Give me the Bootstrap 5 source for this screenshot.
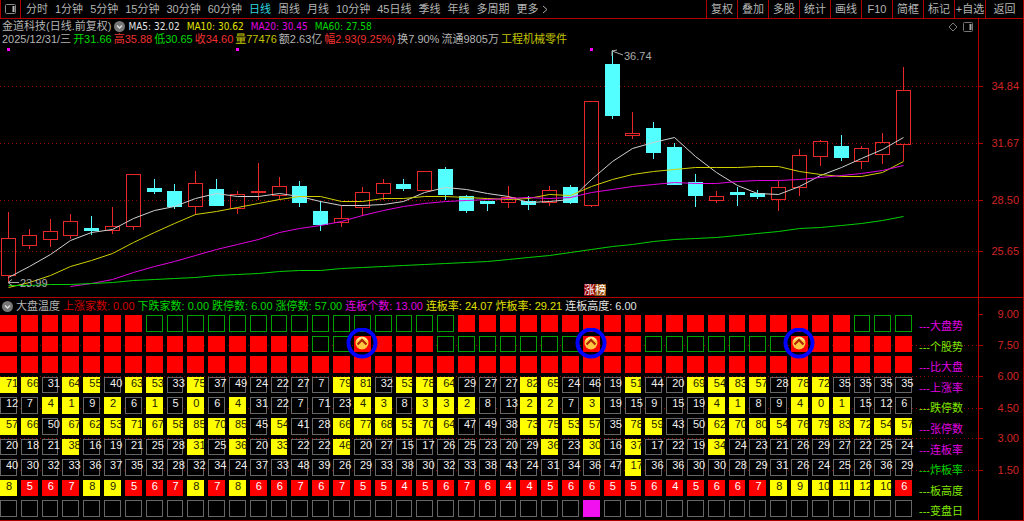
<!DOCTYPE html>
<html lang="zh-CN">
<head>
<meta charset="utf-8">
<meta name="viewport" content="width=device-width, initial-scale=1">
<title>金道科技 日线</title>
<link href="https://cdn.jsdelivr.net/npm/bootstrap@5.3.0/dist/css/bootstrap.min.css" rel="stylesheet">
<style>
:root { --line: #b00000; --dim: #b4b4b4; }
body { background: #000; color: var(--dim); font: 11px/13px "Liberation Sans", "Noto Sans CJK SC", sans-serif; }
button { background: none; border: 0; color: inherit; padding: 0; white-space: nowrap; }
.toolbar { height: 19px; border-bottom: 1px solid var(--line); }
.tool-icon { width: 21px; border-left: 1px solid var(--line); border-right: 1px solid var(--line); }
.periods { gap: 7px; padding-left: 5px; }
.periods .current { color: #2fd6e0; }
.actions { border-right: 1px solid var(--line); }
.actions button { width: 31px; border-left: 1px solid var(--line); }
.actions button:last-child { width: 38px; }
.axis { width: 46px; flex: none; border-left: 1px solid var(--line); border-right: 1px solid var(--line); }
.panel-chart { flex: 279 1 0; min-height: 0; }
.panel-heat { flex: 223 1 0; min-height: 0; border-top: 1px solid var(--line); border-bottom: 1px solid var(--line); }
.plot { min-width: 0; }
.info { top: 1px; left: 2px; right: 4px; }
.ma-row { font-family: "DejaVu Sans Condensed", "Noto Sans CJK SC", sans-serif; font-size: 10px; gap: 3px; }
.ma-row h1 { font: 11px/13px "Liberation Sans", "Noto Sans CJK SC", sans-serif; margin: 0; }
.ma-list { gap: 7px; }
.quote-row { gap: 2px; }
.heat-head { gap: 3px; height: 15px; padding: 2px 0 0 2px; }
.c-white { color: #e4e4e4; } .c-yellow { color: #e0e000; } .c-mag { color: #e000e0; } .c-green { color: #00d800; }
.c-red { color: #f03030; } .c-dred { color: #d00000; } .c-olive { color: #c4c400; } .c-lime { color: #80e800; }
.heat { flex: 1 1 0; min-height: 0; padding-bottom: 1px; }
.heat table, .heat tbody { display: flex; flex-direction: column; flex: 1; min-width: 0; margin: 0; }
.heat tr { display: grid; grid-template-columns: repeat(44, minmax(0, 1fr)) 64px; flex: 1 1 0; margin-left: -2px; }
.heat td { padding: 2px; display: flex; position: relative; }
.heat th { font-weight: 400; padding: 7px 0 0 5px; line-height: 13px; white-space: nowrap; }
.cell { flex: 1; min-width: 0; border: 1px solid #666; padding-left: 5px; line-height: 11px; color: #eee; white-space: nowrap; background: #000; }
.cell.is-red { background: #f00; border-color: #f00; color: #fff; }
.cell.is-hot { background: #ff0; border-color: #ff0; color: #222200; }
.cell.is-green { border-color: #00a000; }
.cell.is-turn { background: #f010f0; border-color: #f010f0; }
.signal { top: 50%; left: 50%; transform: translate(-50%, -50%); z-index: 2; }
svg text { font-family: "Liberation Sans", "Noto Sans CJK SC", sans-serif; font-size: 11px; }
</style>
</head>
<body>
<div class="vh-100 d-flex flex-column overflow-hidden">
  <header class="toolbar d-flex justify-content-between flex-shrink-0">
    <nav class="d-flex" aria-label="周期">
      <button class="tool-icon d-flex align-items-center justify-content-center" aria-label="侧栏">
        <svg width="12" height="11" fill="none" stroke="#888"><rect x=".5" y=".5" width="10" height="9" rx="1"/><path d="M8.500 2v6" stroke="#bbb" stroke-width="2"/></svg>
      </button>
      <div class="periods d-flex align-items-center" id="periods"></div>
    </nav>
    <div class="actions d-flex" id="actions"></div>
  </header>

  <section class="panel-chart d-flex">
    <div class="plot flex-fill position-relative">
      <svg id="kline" class="position-absolute w-100 h-100"></svg>
      <div class="info position-absolute d-flex justify-content-between">
        <div>
          <div class="ma-row d-flex align-items-center">
            <h1>金道科技(日线.前复权)</h1>
            <svg width="11" height="11"><circle cx="5.500" cy="5.500" r="5.500" fill="#777"/><path d="M3 4.500l2.500 2.500L8 4.500" fill="none" stroke="#ddd" stroke-width="1.500"/></svg>
            <div class="ma-list d-flex"><span class="c-white">MA5: 32.02</span><span class="c-yellow">MA10: 30.62</span><span class="c-mag">MA20: 30.45</span><span class="c-green">MA60: 27.58</span></div>
          </div>
          <div class="quote-row d-flex">
            <span>2025/12/31/三</span><span class="c-green">开31.66</span><span class="c-red">高35.88</span><span class="c-green">低30.65</span><span class="c-red">收34.60</span><span class="c-olive">量77476</span><span>额2.63亿</span><span class="c-red">幅2.93(9.25%)</span><span>换7.90%</span><span>流通9805万</span><span class="c-olive">工程机械零件</span>
          </div>
        </div>
        <svg width="28" height="14" fill="none" stroke="#777"><path d="M7 3l4 4-4 4-4-4z"/><rect x="17.500" y="2.500" width="9" height="9" rx="1"/><path d="M24.500 4v6" stroke="#aaa" stroke-width="2"/></svg>
      </div>
    </div>
    <div class="axis"><svg id="priceAxis" class="w-100 h-100 d-block"></svg></div>
  </section>

  <section class="panel-heat d-flex">
    <div class="plot flex-fill d-flex flex-column position-relative">
      <svg id="heatGrid" class="position-absolute w-100 h-100"></svg>
      <div class="heat-head d-flex align-items-center position-relative">
        <svg width="11" height="11"><circle cx="5.500" cy="5.500" r="5.500" fill="#777"/><path d="M3 4.500l2.500 2.500L8 4.500" fill="none" stroke="#ddd" stroke-width="1.500"/></svg>
        <span>大盘温度</span><span class="c-dred">上涨家数: 0.00</span><span class="c-green">下跌家数: 0.00</span><span class="c-green">跌停数: 6.00</span><span class="c-green">涨停数: 57.00</span><span class="c-mag">连板个数: 13.00</span><span class="c-yellow">连板率: 24.07</span><span class="c-yellow">炸板率: 29.21</span><span class="c-white">连板高度: 6.00</span>
      </div>
      <div class="heat d-flex position-relative"><table><tbody id="heat"></tbody></table></div>
    </div>
    <div class="axis"><svg id="heatAxis" class="w-100 h-100 d-block"></svg></div>
  </section>
</div>

<script src="https://cdn.jsdelivr.net/npm/bootstrap@5.3.0/dist/js/bootstrap.bundle.min.js"></script>
<script>
const $ = id => document.getElementById(id);

$('periods').innerHTML = '分时 1分钟 5分钟 15分钟 30分钟 60分钟 日线 周线 月线 10分钟 45日线 季线 年线 多周期'.split(' ')
  .map(t => `<button class="${t === '日线' ? 'current' : ''}">${t}</button>`).join('') +
  '<button>更多 <svg width="6" height="9" fill="none" stroke="#aaa"><path d="M1 1l4 3.500L1 8"/></svg></button>';
$('actions').innerHTML = '复权 叠加 多股 统计 画线 F10 简框 标记 +自选 返回'.split(' ').map(t => `<button>${t}</button>`).join('');

// Heat map: one string of 44 values per row
const rows = [
  ['大盘势', 'mag', 'r'.repeat(7) + 'g'.repeat(15) + 'r'.repeat(19) + 'ggg'],
  ['个股势', 'lime', 'r'.repeat(15) + 'gg' + 'rrrr' + 'g'.repeat(7) + 'rrr' + 'g'.repeat(7) + 'r'.repeat(6)],
  ['比大盘', 'mag', 'r'.repeat(44)],
  ['上涨率', 'mag', '71 66 31 64 55 40 63 53 33 75 37 49 24 22 27 7 79 81 32 53 78 64 29 27 27 82 65 24 46 19 51 44 20 69 54 83 57 28 78 72 35 35 35 35', v => v > 50],
  ['跌停数', 'lime', '12 7 4 1 9 2 6 1 5 0 6 4 31 22 7 71 23 4 3 8 3 3 2 8 13 2 2 7 3 19 15 9 15 19 4 1 8 9 4 0 1 15 12 6', v => v < 5],
  ['张停数', 'mag', '57 66 50 67 62 53 71 67 58 85 70 85 45 54 41 28 66 77 68 53 70 64 47 49 38 73 75 53 57 35 78 59 43 50 62 70 80 54 76 79 83 72 54 57', v => v > 50],
  ['连板率', 'mag', '20 18 21 38 16 19 21 25 28 31 25 36 20 33 22 22 46 20 27 15 17 26 25 23 20 29 36 23 30 16 37 17 22 19 34 24 23 21 26 29 27 22 25 24', v => v >= 30],
  ['炸板率', 'green', '40 30 32 33 36 37 35 32 28 32 34 24 37 33 48 39 26 29 33 38 30 32 33 38 43 24 31 34 36 47 17 36 36 30 30 28 29 31 26 24 25 26 36 29', v => v < 20],
  ['板高度', 'lime', '8 5 6 7 8 9 5 6 7 8 7 8 6 6 7 6 7 5 5 4 5 6 7 6 4 4 5 6 6 5 5 6 4 5 6 6 7 8 9 10 11 12 10 6', v => v >= 8, true],
  ['变盘日', 'lime', '.'.repeat(28) + 'm' + '.'.repeat(15)]
];
const flag = { r: 'is-red', g: 'is-green', m: 'is-turn', '.': '' };
const signal = `<svg class="signal position-absolute" width="32" height="32" viewBox="0 0 32 32">
  <circle cx="16" cy="15" r="13.500" fill="none" stroke="#0000ff" stroke-width="4"/><circle cx="16" cy="15" r="6.500" fill="#ffc840"/>
  <path d="M10 13a6.500 6.500 0 0 1 12 0l-6-3z" fill="#fff0a0"/><path d="M11.500 16.500L16 12l4.500 4.500" fill="none" stroke="#b02000" stroke-width="2"/></svg>`;
$('heat').innerHTML = rows.map(([name, color, data, hot, solid], r) => {
  const cells = (hot ? data.split(' ') : [...data]).map((v, i) => {
    const cls = hot ? (hot(+v) ? 'is-hot' : solid ? 'is-red' : '') : flag[v];
    return `<td><div class="cell ${cls}">${hot ? v : ''}</div>${r === 1 && [17, 28, 38].includes(i) ? signal : ''}</td>`;
  }).join('');
  return `<tr>${cells}<th scope="row" class="c-${color}">---${name}</th></tr>`;
}).join('');

// Candles: direction, body top, body bottom, wick top, wick bottom
const candles = [
  ['u',239,276,213,283],['u',236,246,230,249],['u',232,240,220,247],['u',222,236,215,239],['d',229,231,217,235],['u',227,231,208,234],
  ['u',175,227,175,230],['d',189,192,180,194],['d',192,207,185,209],['u',184,207,172,215],['d',190,206,180,206],['u',195,209,192,214],
  ['u',192,193,164,200],['u',187,196,178,200],['d',187,203,182,207],['d',212,225,202,231],['u',219,223,207,227],['u',193,208,188,216],
  ['u',184,194,180,200],['d',185,189,180,191],['u',172,191,172,191],['d',170,195,168,200],['d',197,211,196,213],['d',202,204,202,211],
  ['u',198,203,187,208],['d',202,205,197,210],['u',191,203,187,206],['d',188,203,186,204],['u',101,206,101,207],['d',64,115,50,118],
  ['u',133,135,112,138],['d',128,153,122,159],['d',148,185,143,185],['d',183,196,175,207],['u',197,201,192,203],['d',193,195,188,206],
  ['d',194,197,191,199],['u',188,200,182,211],['u',156,188,150,196],['u',141,157,140,166],['d',147,158,135,161],['u',149,162,147,169],
  ['u',142,155,133,164],['u',90,144,67,161]
];
const averages = [
  ['#d0d0d0', 0, [278,267,255,241,233,230,219,211,207,199,194,197,197,194,197,202,206,206,205,202,193,188,190,194,197,203,202,200,180,162,149,142,137,157,173,186,194,195,187,176,168,159,150,137]],
  ['#d0d000', 0, [288,283,276,267,261,254,243,233,224,215,212,208,204,200,197,197,202,202,199,199,197,197,198,199,200,199,195,196,187,180,175,172,170,168,168,168,167,167,172,175,177,177,173,162]],
  ['#e000e0', 3, [287,284,280,273,267,262,256,250,245,240,233,229,226,222,216,211,207,204,202,201,200,199,198,199,198,193,190,187,185,183,184,184,182,181,181,180,178,176,174,171,166]],
  ['#00d000', 0, [286,286,285,285,284,283,281,280,279,278,276,275,274,272,271,271,269,268,267,266,265,264,263,262,260,258,256,253,250,247,245,242,240,239,238,236,234,232,229,228,226,224,221,217]]
];
const prices = [['34.84', 86], ['31.67', 143], ['28.50', 201], ['25.65', 252]];
const levels = [['9.00', 315], ['7.50', 346], ['6.00', 377], ['4.50', 408], ['3.00', 438], ['1.50', 470]];

function axis(id, ticks, y) {
  $(id).innerHTML = ticks.map(([t, v]) => `<path d="M0 ${y(v) + .5}h4" stroke="#b00000"/><text x="40" y="${y(v) + 4}" text-anchor="end" fill="#d02424">${t}</text>`).join('');
}
function draw() {
  const box = $('kline').getBoundingClientRect(), W = box.width;
  const step = (W - 62) / 44, cx = i => Math.floor(step * (i + .5) - 2);
  const y = v => Math.round((v - 19) * box.height / 279);
  let s = prices.map(([, v]) => `<path d="M0 ${y(v) + .5}H${W}" stroke="#900000" stroke-dasharray="1 3"/>`).join('');
  candles.forEach(([d, t, b, h, l], i) => {
    const x = cx(i), c = d === 'u' ? '#e62828' : '#54ffff';
    s += `<path d="M${x + .5} ${y(h)}V${y(t)}M${x + .5} ${y(b)}V${y(l) + 1}" stroke="${c}"/>`;
    s += d === 'u' ? `<rect x="${x - 6.5}" y="${y(t) + .5}" width="14" height="${y(b) - y(t)}" fill="none" stroke="${c}"/>`
                   : `<rect x="${x - 7}" y="${y(t)}" width="15" height="${y(b) - y(t) + 1}" fill="${c}"/>`;
  });
  averages.forEach(([c, from, v]) => {
    s += `<polyline fill="none" stroke="${c}" points="${v.map((p, i) => `${cx(i + from) + .5},${y(p) + .5}`).join(' ')}"/>`;
  });
  [0, 11, 28].forEach(i => s += `<rect x="${cx(i) - 1}" y="${y(48)}" width="3" height="3" fill="#f0f"/>`);
  const a = cx(0), b = cx(29), k = cx(28);
  s += `<path d="M${a + 11} ${y(283) + .5}H${a}l4 -3m-4 3l4 3M${b + 11} ${y(55)}L${b} ${y(51)}m0 5v-5l5 -1" fill="none" stroke="#aaa"/>
    <text x="${a + 12}" y="${y(288)}" fill="#aaa">23.99</text><text x="${b + 12}" y="${y(60)}" fill="#aaa">36.74</text>
    <rect x="${k - 7}" y="${y(285)}" width="11" height="12" fill="#900000"/><rect x="${k + 4}" y="${y(285)}" width="11" height="12" fill="#9a5010"/>
    <text x="${k - 7}" y="${y(295)}" fill="#fff">涨榜</text>`;
  $('kline').innerHTML = s;
  axis('priceAxis', prices, y);
  const h = $('heatGrid').getBoundingClientRect().height, hy = v => Math.round((v - 299) * h / 221);
  $('heatGrid').innerHTML = levels.slice(1).map(([, v]) => `<path d="M0 ${hy(v) + .5}H${W}" stroke="#900000" stroke-dasharray="1 3"/>`).join('');
  axis('heatAxis', levels, hy);
}
addEventListener('resize', draw);
draw();
</script>
</body>
</html>
